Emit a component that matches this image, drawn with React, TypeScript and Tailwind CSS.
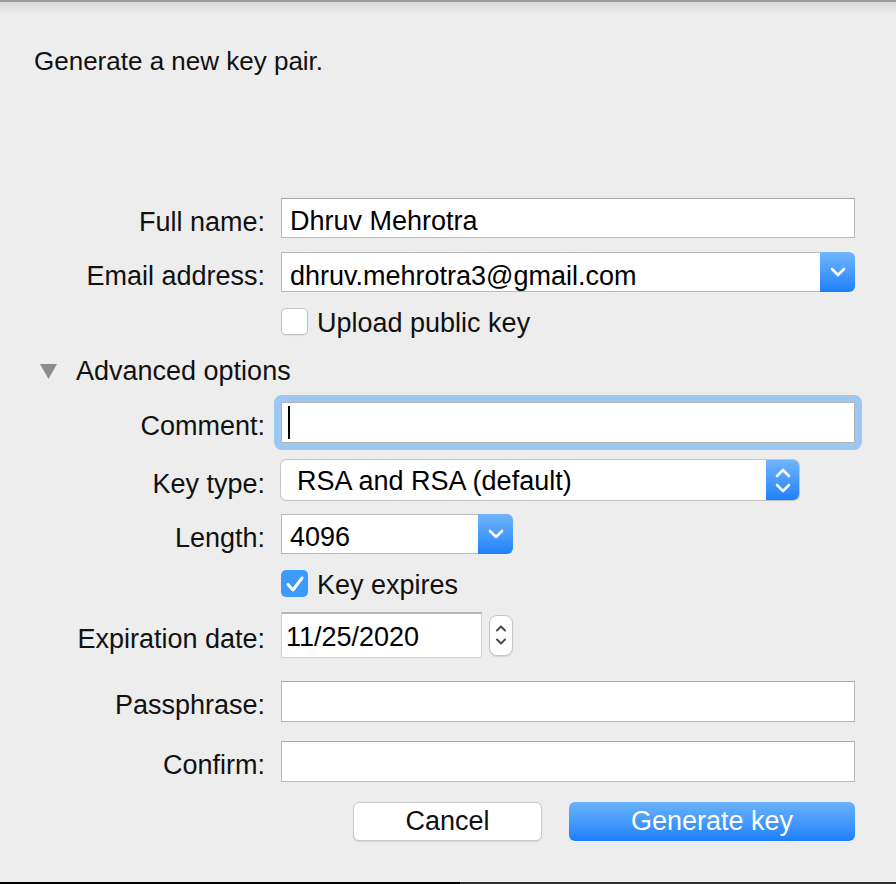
const Chevron = ({ up = false }: { up?: boolean }) => (
  <svg width="16" height="10" viewBox="0 0 16 10" className="block">
    <path
      d={up ? "M2 8 L8 2 L14 8" : "M2 2 L8 8 L14 2"}
      fill="none"
      stroke="white"
      strokeWidth="2.6"
      strokeLinecap="round"
      strokeLinejoin="round"
    />
  </svg>
);

const Label = ({ children }: { children: React.ReactNode }) => (
  <div className="w-[265px] shrink-0 text-right pt-[8px] text-[27px] leading-none text-[#111]">{children}</div>
);

const TextField = ({ value = "", width = "w-[574px]" }: { value?: string; width?: string }) => (
  <div
    className={`${width} h-full bg-white border border-[#b9b9b9] border-t-[#a9a9a9] flex items-center pl-2 pt-[6px] text-[27px] leading-none text-black`}
  >
    {value}
  </div>
);

const BlueTab = () => (
  <div className="w-[35px] h-full rounded-r-[6px] bg-gradient-to-b from-[#6fb5fb] to-[#1b80fb] flex items-center justify-center">
    <Chevron />
  </div>
);

const Checkbox = ({ checked = false }: { checked?: boolean }) =>
  checked ? (
    <div className="w-[27px] h-[27px] rounded-[5px] bg-[#3c9afb] flex items-center justify-center">
      <svg width="20" height="18" viewBox="0 0 20 18">
        <path d="M3 9.5 L8 15 L17 3" fill="none" stroke="white" strokeWidth="3" strokeLinecap="round" strokeLinejoin="round" />
      </svg>
    </div>
  ) : (
    <div className="w-[27px] h-[27px] rounded-[5px] bg-white border border-[#c2c2c2] shadow-[0_1px_1px_rgba(0,0,0,0.08)]" />
  );

export default function App() {
  return (
    <div className="w-[896px] h-[884px] bg-[#ededed] flex flex-col overflow-hidden font-['Liberation_Sans',Arial,sans-serif]">
      {/* window edge */}
      <div className="h-[2px] bg-[#9c9c9c]" />
      <div className="h-[12px] bg-gradient-to-b from-[#d8d8d8] to-[#ededed]" />

      <div className="mt-[30px] h-[34px] pl-[34px] flex items-center text-[26px] text-[#111]">
        Generate a new key pair.
      </div>

      {/* Full name */}
      <div className="mt-[120px] h-[40px] flex items-center gap-4">
        <Label>Full name:</Label>
        <TextField value="Dhruv Mehrotra" />
      </div>

      {/* Email */}
      <div className="mt-[14px] h-[40px] flex items-center gap-4">
        <Label>Email address:</Label>
        <div className="flex h-full w-[574px]">
          <div className="flex-1 h-full bg-white border border-[#b9b9b9] border-r-0 flex items-center pl-2 pt-[8px] text-[27px] leading-none text-black">
            dhruv.mehrotra3@gmail.com
          </div>
          <BlueTab />
        </div>
      </div>

      {/* Upload */}
      <div className="mt-[16px] h-[27px] flex items-center gap-[9px] pl-[281px]">
        <Checkbox />
        <span className="pt-[4px] text-[27px] leading-none text-[#111]">Upload public key</span>
      </div>

      {/* Advanced options */}
      <div className="mt-[21px] h-[30px] flex items-center pl-[40px]">
        <svg width="17" height="15" viewBox="0 0 17 15" className="block">
          <path d="M0 0 H17 L8.5 15 Z" fill="#8c8c8c" />
        </svg>
        <span className="ml-[19px] text-[27px] leading-none text-[#111]">Advanced options</span>
      </div>

      {/* Comment */}
      <div className="mt-[16px] h-[41px] flex items-center gap-4">
        <Label>Comment:</Label>
        <div className="-m-[7px] p-[7px] rounded-[8px] bg-[#9dc7f3] h-[55px]">
          <div className="w-[574px] h-full bg-white border border-[#b3b3b3] flex items-center pl-[6px]">
            <div className="w-[2px] h-[33px] bg-black" />
          </div>
        </div>
      </div>

      {/* Key type */}
      <div className="mt-[17px] h-[40px] flex items-center gap-4">
        <Label>Key type:</Label>
        <div className="flex h-full w-[518px] rounded-[6px] shadow-[0_0_0_1px_#c4c4c4,0_1px_1px_rgba(0,0,0,0.1)]">
          <div className="flex-1 h-full bg-white rounded-l-[6px] flex items-center pl-4 pt-[2px] text-[27px] leading-none text-black">
            RSA and RSA (default)
          </div>
          <div className="w-[33px] h-full rounded-r-[6px] bg-gradient-to-b from-[#6fb5fb] to-[#1b80fb] flex flex-col items-center justify-center gap-[5px]">
            <Chevron up />
            <Chevron />
          </div>
        </div>
      </div>

      {/* Length */}
      <div className="mt-[14px] h-[40px] flex items-center gap-4">
        <Label>Length:</Label>
        <div className="flex h-full w-[232px]">
          <div className="flex-1 h-full bg-white border border-[#b9b9b9] border-r-0 flex items-center pl-2 pt-[6px] text-[27px] leading-none text-black">
            4096
          </div>
          <BlueTab />
        </div>
      </div>

      {/* Key expires */}
      <div className="mt-[16px] h-[27px] flex items-center gap-[9px] pl-[281px]">
        <Checkbox checked />
        <span className="pt-[4px] text-[27px] leading-none text-[#111]">Key expires</span>
      </div>

      {/* Expiration date */}
      <div className="mt-[15px] h-[46px] flex items-center gap-4">
        <Label>Expiration date:</Label>
        <div className="w-[201px] h-full bg-white border border-[#d2d2d2] border-t-2 border-t-[#b8b8b8] flex items-center pl-[4px] pt-[4px] text-[27px] leading-none text-black">
          11/25/2020
        </div>
        <div className="-ml-[9px] w-[24px] h-[41px] rounded-[8px] bg-white border border-[#c6c6c6] shadow-[0_1px_1px_rgba(0,0,0,0.1)] flex flex-col items-center justify-center gap-[6px]">
          <svg width="12" height="7" viewBox="0 0 12 7" className="block">
            <path d="M2 5.5 L6 1.5 L10 5.5" fill="none" stroke="#4a4a4a" strokeWidth="2" strokeLinecap="round" strokeLinejoin="round" />
          </svg>
          <svg width="12" height="7" viewBox="0 0 12 7" className="block">
            <path d="M2 1.5 L6 5.5 L10 1.5" fill="none" stroke="#4a4a4a" strokeWidth="2" strokeLinecap="round" strokeLinejoin="round" />
          </svg>
        </div>
      </div>

      {/* Passphrase */}
      <div className="mt-[23px] h-[41px] flex items-center gap-4">
        <Label>Passphrase:</Label>
        <TextField />
      </div>

      {/* Confirm */}
      <div className="mt-[19px] h-[41px] flex items-center gap-4">
        <Label>Confirm:</Label>
        <TextField />
      </div>

      {/* Buttons */}
      <div className="mt-[20px] h-[39px] flex items-center pl-[353px] gap-[27px]">
        <button className="w-[189px] h-full rounded-[6px] bg-white border border-[#c9c9c9] shadow-[0_1px_1px_rgba(0,0,0,0.12)] text-[27px] leading-none text-[#111]">
          Cancel
        </button>
        <button className="w-[286px] h-full rounded-[6px] bg-gradient-to-b from-[#6ab2fa] to-[#1a7ffb] text-[27px] leading-none text-white">
          Generate key
        </button>
      </div>

      <div className="flex-1" />
      <div className="h-[2px] flex">
        <div className="w-[460px] bg-black" />
        <div className="flex-1 bg-[#2f2f2f]" />
      </div>
    </div>
  );
}
